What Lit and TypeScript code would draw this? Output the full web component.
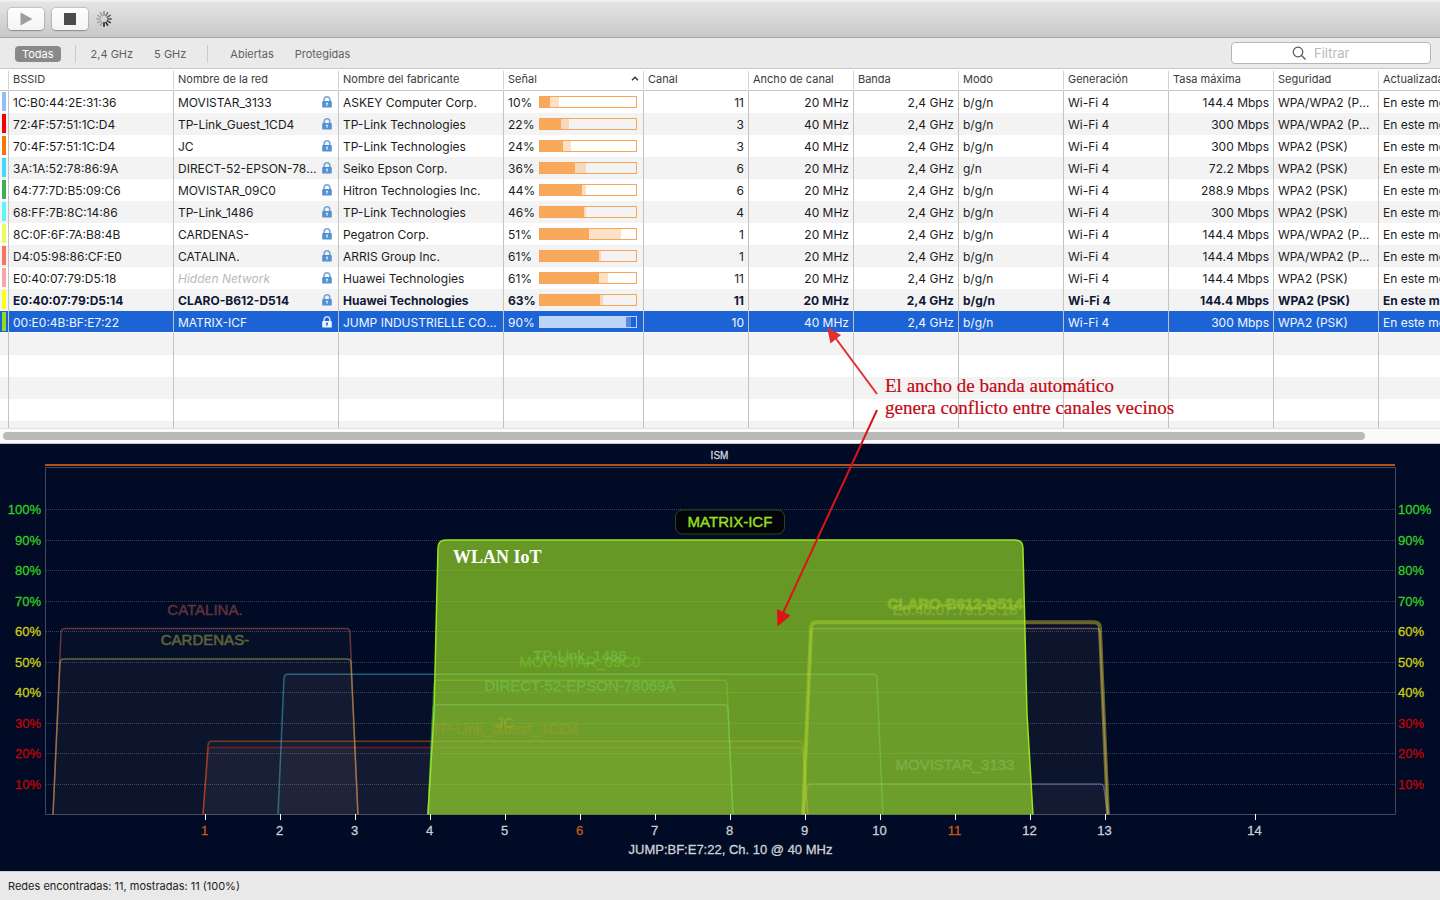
import { LitElement, html, svg, css } from "lit";
import { customElement, property, state } from "lit/decorators.js";
import { classMap } from "lit/directives/class-map.js";

interface Network {
  color: string;
  bssid: string;
  name: string;
  vendor: string;
  signal: number;
  peak: number;
  channel: number;
  width: number;
  mode: string;
  rate: string;
  security: string;
  hidden?: boolean;
  joined?: boolean;
  selected?: boolean;
}

const NETWORKS: Network[] = [
  { color: "#92bdfd", bssid: "1C:B0:44:2E:31:36", name: "MOVISTAR_3133", vendor: "ASKEY Computer Corp.", signal: 10, peak: 20, channel: 11, width: 20, mode: "b/g/n", rate: "144.4", security: "WPA/WPA2 (PSK)" },
  { color: "#f50000", bssid: "72:4F:57:51:1C:D4", name: "TP-Link_Guest_1CD4", vendor: "TP-Link Technologies", signal: 22, peak: 30, channel: 3, width: 40, mode: "b/g/n", rate: "300", security: "WPA/WPA2 (PSK)" },
  { color: "#f57900", bssid: "70:4F:57:51:1C:D4", name: "JC", vendor: "TP-Link Technologies", signal: 24, peak: 32, channel: 3, width: 40, mode: "b/g/n", rate: "300", security: "WPA2 (PSK)" },
  { color: "#42d8fc", bssid: "3A:1A:52:78:86:9A", name: "DIRECT-52-EPSON-78069A", vendor: "Seiko Epson Corp.", signal: 36, peak: 48, channel: 6, width: 20, mode: "g/n", rate: "72.2", security: "WPA2 (PSK)" },
  { color: "#3fae55", bssid: "64:77:7D:B5:09:C6", name: "MOVISTAR_09C0", vendor: "Hitron Technologies Inc.", signal: 44, peak: 48, channel: 6, width: 20, mode: "b/g/n", rate: "288.9", security: "WPA2 (PSK)" },
  { color: "#5ef4fb", bssid: "68:FF:7B:8C:14:86", name: "TP-Link_1486", vendor: "TP-Link Technologies", signal: 46, peak: 48, channel: 4, width: 40, mode: "b/g/n", rate: "300", security: "WPA2 (PSK)" },
  { color: "#eefc55", bssid: "8C:0F:6F:7A:B8:4B", name: "CARDENAS-", vendor: "Pegatron Corp.", signal: 51, peak: 84, channel: 1, width: 20, mode: "b/g/n", rate: "144.4", security: "WPA/WPA2 (PSK)" },
  { color: "#f8745c", bssid: "D4:05:98:86:CF:E0", name: "CATALINA.", vendor: "ARRIS Group Inc.", signal: 61, peak: 64, channel: 1, width: 20, mode: "b/g/n", rate: "144.4", security: "WPA/WPA2 (PSK)" },
  { color: "#f9a6a6", bssid: "E0:40:07:79:D5:18", name: "Hidden Network", vendor: "Huawei Technologies", signal: 61, peak: 71, channel: 11, width: 20, mode: "b/g/n", rate: "144.4", security: "WPA2 (PSK)", hidden: true },
  { color: "#fdfd14", bssid: "E0:40:07:79:D5:14", name: "CLARO-B612-D514", vendor: "Huawei Technologies", signal: 63, peak: 66, channel: 11, width: 20, mode: "b/g/n", rate: "144.4", security: "WPA2 (PSK)", joined: true },
  { color: "#8fdc1e", bssid: "00:E0:4B:BF:E7:22", name: "MATRIX-ICF", vendor: "JUMP INDUSTRIELLE COMPUTERTECHNIK", signal: 90, peak: 95, channel: 10, width: 40, mode: "b/g/n", rate: "300", security: "WPA2 (PSK)", selected: true },
];

const COLUMNS: { label: string; cls: string }[] = [
  { label: "BSSID", cls: "wide" },
  { label: "Nombre de la red", cls: "wide" },
  { label: "Nombre del fabricante", cls: "wide" },
  { label: "Señal", cls: "signal-col" },
  { label: "Canal", cls: "std" },
  { label: "Ancho de canal", cls: "std" },
  { label: "Banda", cls: "std" },
  { label: "Modo", cls: "std" },
  { label: "Generación", cls: "std" },
  { label: "Tasa máxima", cls: "std" },
  { label: "Seguridad", cls: "std" },
  { label: "Actualizada", cls: "last" },
];

@customElement("network-table")
class NetworkTable extends LitElement {
  static styles = css`
    :host {
      display: flex;
      flex-direction: column;
      min-height: 0;
      background: #fff;
      color: #1c1c1c;
    }
    .viewport {
      flex: 1;
      min-height: 0;
      overflow: hidden;
    }
    table {
      table-layout: fixed;
      width: 1519px;
      border-collapse: separate;
      border-spacing: 0;
      font-size: 12px;
    }
    .mark-col { width: 9px; }
    .wide { width: 165px; }
    .signal-col { width: 140px; }
    .std { width: 105px; }
    .last { width: 140px; }
    th {
      height: 21px;
      padding: 0;
      border-bottom: 1px solid #c9c9c9;
      font-size: 11px;
      font-weight: 400;
      text-align: left;
      color: #3a3a3a;
    }
    .head {
      display: flex;
      align-items: center;
      justify-content: space-between;
      box-sizing: border-box;
      height: 18px;
      padding: 0 4px 2px;
      border-right: 1px solid #d2d2d2;
    }
    .caret {
      width: 8px;
      height: 5px;
      fill: none;
      stroke: #333;
      stroke-width: 1.4;
    }
    td {
      box-sizing: border-box;
      height: 22px;
      padding: 2px 4px 0;
      border-right: 1px solid #c3c3c3;
      line-height: 20px;
      white-space: nowrap;
      overflow: hidden;
      text-overflow: ellipsis;
    }
    td.security { padding-right: 8px; }
    td.mark { padding: 0 2px; }
    .swatch {
      width: 4px;
      height: 19px;
      margin-bottom: 1px;
    }
    tbody tr:nth-child(even) { background: #f3f3f3; }
    tbody tr.joined {
      font-weight: 700;
      color: #0f1738;
    }
    tbody tr.selected {
      background: linear-gradient(#1c64d6 21px, #fff 21px);
      color: #f2f6ff;
    }
    .num { text-align: right; }
    .name, .signal {
      display: flex;
      align-items: center;
    }
    .name { gap: 2px; padding-right: 2px; }
    .label {
      flex: 1;
      overflow: hidden;
      text-overflow: ellipsis;
    }
    .ghost {
      font-style: italic;
      color: #b9b9b9;
    }
    .lock {
      flex: none;
      width: 10px;
      height: 12px;
      margin-bottom: 3px;
      color: #4489cc;
    }
    .selected .lock { color: #fff; }
    .signal {
      justify-content: space-between;
      padding-right: 2px;
    }
    .bar {
      position: relative;
      box-sizing: border-box;
      width: 98px;
      height: 12px;
      margin-bottom: 2px;
      border: 1px solid #f8a656;
      overflow: hidden;
    }
    .bar i {
      position: absolute;
      inset: 0 auto 0 0;
      background: #f9a95b;
    }
    .bar .peak { opacity: 0.35; }
    .selected .bar { border-color: #bcd5f5; }
    .selected .bar i { background: #bcd5f5; }
    .scroller {
      display: flex;
      align-items: center;
      height: 14px;
      border-top: 1px solid #e3e3e3;
      border-bottom: 1px solid #c6c6c6;
      background: #fafafa;
      padding: 0 3px;
    }
    .thumb {
      width: 95%;
      height: 8px;
      border-radius: 4px;
      background: #b9b9b9;
    }
  `;

  private row(n: Network) {
    return html`<tr class=${classMap({ joined: !!n.joined, selected: !!n.selected })}>
      <td class="mark"><div class="swatch" style="background:${n.color}"></div></td>
      <td>${n.bssid}</td>
      <td>
        <div class="name">
          <span class=${classMap({ label: true, ghost: !!n.hidden })}>${n.name}</span>
          <svg class="lock" viewBox="0 0 10 12" aria-hidden="true">
            <path d="M2.2 6V3.6a2.8 2.8 0 0 1 5.6 0V6" fill="none" stroke="currentColor" stroke-width="1.6" opacity=".75" />
            <rect x="0.2" y="5" width="9.6" height="6.6" rx="0.9" fill="currentColor" opacity=".92" />
            <path d="M5 6.6a1 1 0 0 1 .5 1.9v1.6h-1V8.5a1 1 0 0 1 .5-1.9z" fill=${n.selected ? "#1c64d6" : "#d4e8fa"} />
          </svg>
        </div>
      </td>
      <td>${n.vendor}</td>
      <td>
        <div class="signal">
          <span>${n.signal}%</span>
          <div class="bar">
            <i class="peak" style="width:${n.peak}%"></i>
            <i style="width:${n.signal}%"></i>
          </div>
        </div>
      </td>
      <td class="num">${n.channel}</td>
      <td class="num">${n.width} MHz</td>
      <td class="num">2,4 GHz</td>
      <td>${n.mode}</td>
      <td>Wi-Fi 4</td>
      <td class="num">${n.rate} Mbps</td>
      <td class="security">${n.security}</td>
      <td>En este momento</td>
    </tr>`;
  }

  render() {
    return html`
      <div class="viewport">
        <table>
          <colgroup>
            <col class="mark-col" />
            ${COLUMNS.map((c) => html`<col class=${c.cls} />`)}
          </colgroup>
          <thead>
            <tr>
              <th><div class="head"></div></th>
              ${COLUMNS.map(
                (c) => html`<th scope="col">
                  <div class="head">
                    <span>${c.label}</span>
                    ${c.label === "Señal"
                      ? html`<svg class="caret" viewBox="0 0 8 5" aria-hidden="true"><path d="M1 4.2 4 1.2l3 3" /></svg>`
                      : ""}
                  </div>
                </th>`
              )}
            </tr>
          </thead>
          <tbody>
            ${NETWORKS.map((n) => this.row(n))}
            ${Array.from({ length: 30 }, () => html`<tr>
              <td></td>${COLUMNS.map(() => html`<td></td>`)}
            </tr>`)}
          </tbody>
        </table>
      </div>
      <div class="scroller"><div class="thumb"></div></div>
    `;
  }
}

interface Shape {
  label: string;
  center: number;
  span: number;
  level: number;
  inset: number;
  color: string;
  bold?: boolean;
}

const SHAPES: Shape[] = [
  { label: "MOVISTAR_3133", center: 11, span: 2, level: 10, inset: 4, color: "#86b8fd" },
  { label: "TP-Link_Guest_1CD4", center: 5, span: 4, level: 22, inset: 5, color: "#f51414" },
  { label: "JC", center: 5, span: 4, level: 24, inset: 5, color: "#f57900" },
  { label: "DIRECT-52-EPSON-78069A", center: 6, span: 2, level: 36, inset: 5, color: "#42d8fc" },
  { label: "MOVISTAR_09C0", center: 6, span: 2, level: 44, inset: 6, color: "#3cd028" },
  { label: "TP-Link_1486", center: 6, span: 4, level: 46, inset: 6, color: "#46dcf0" },
  { label: "CARDENAS-", center: 1, span: 2, level: 51, inset: 7, color: "#e8f050" },
  { label: "CATALINA.", center: 1, span: 2, level: 61, inset: 8, color: "#f8745c" },
  { label: "E0:40:07:79:D5:18", center: 11, span: 2, level: 61, inset: 8, color: "#f09aa0" },
  { label: "CLARO-B612-D514", center: 11, span: 2, level: 63, inset: 8, color: "#f4e830", bold: true },
];

const PRIMARY = [1, 6, 11];

@customElement("channel-chart")
class ChannelChart extends LitElement {
  @state() private w = 1440;
  @state() private h = 427;
  private observer?: ResizeObserver;

  static styles = css`
    :host {
      display: block;
      min-height: 0;
      overflow: hidden;
      background: #010b25;
      font-family: "Liberation Sans", Arial, sans-serif;
    }
    svg { display: block; }
    text { font-size: 13px; }
    .frame { fill: none; stroke: #414860; }
    .grid { stroke: #ffffff; stroke-opacity: 0.22; stroke-dasharray: 1 1; }
    .tick { stroke: #fff; }
    .channel { fill: #cdced4; stroke: #cdced4; text-anchor: middle; }
    .primary { fill: #c65a14; stroke: #c65a14; }
    .channel, .pct, .ism, .info { stroke-width: 0.3; }
    .ism { font-size: 10px; fill: #d6d8de; stroke: #d6d8de; text-anchor: middle; }
    .pct { text-anchor: end; }
    .right { text-anchor: start; }
    .high { fill: #37cc22; stroke: #37cc22; }
    .mid { fill: #cccc18; stroke: #cccc18; }
    .low { fill: #bf0505; stroke: #bf0505; }
    .ssid { font-size: 15px; text-anchor: middle; stroke-width: 0.4; }
    .bold { font-weight: 700; stroke-width: 1; }
    .info { fill: #d0d2d8; stroke: #d0d2d8; text-anchor: middle; }
    .pill { fill: #02040a; stroke: #2c4a1a; }
    .active { fill: #98e01e; stroke: #98e01e; }
  `;

  connectedCallback() {
    super.connectedCallback();
    this.observer = new ResizeObserver(([entry]) => {
      this.w = Math.round(entry.contentRect.width);
      this.h = Math.round(entry.contentRect.height);
    });
    this.observer.observe(this);
  }

  disconnectedCallback() {
    this.observer?.disconnect();
    super.disconnectedCallback();
  }

  private get bottom() { return this.h - 56.5; }
  private y(p: number) { return this.bottom - (p * (this.bottom - 23.5)) / 113.77; }
  private get step() { return (this.w - 90) / 18; }
  private x(ch: number) { return 45.5 + (ch + 1.133) * this.step; }

  private outline(center: number, span: number, level: number, inset: number, r: number, kink = 0) {
    const half = (span + 0.033) * this.step;
    const c = this.x(center);
    const top = this.y(level);
    const base = this.bottom;
    const l = c - half;
    const rt = c + half;
    const ky = base - (base - top) * 0.37;
    const up = kink ? `L${l + kink} ${ky}` : "";
    const down = kink ? `L${rt - kink} ${ky}` : "";
    return `M${l} ${base}${up}L${l + inset} ${top + r}Q${l + inset} ${top} ${l + inset + r} ${top}H${rt - inset - r}Q${rt - inset} ${top} ${rt - inset} ${top + r}${down}L${rt} ${base}`;
  }

  render() {
    const { w, h, bottom } = this;
    const right = w - 44.5;
    const levels = [10, 20, 30, 40, 50, 60, 70, 80, 90, 100];
    const tone = (p: number) => (p >= 70 ? "high" : p >= 40 ? "mid" : "low");
    const channels = Array.from({ length: 14 }, (_, i) => i + 1);
    const matrixY = this.y(90);
    const green = this.outline(8, 4, 90, 10, 8, 6);
    return html`<svg width=${w} height=${h} role="img" aria-label="Canales">
      <text class="ism" x=${w / 2 - 0.5} y="15">ISM</text>
      <rect x="45" y="20" width=${Math.max(0, w - 90)} height="2" fill="#ae531b" />
      ${levels.map((p) => {
        const gy = Math.floor(this.y(p) + 0.05) + 0.5;
        return svg`
          <line class="grid" x1="46" x2=${right} y1=${gy} y2=${gy} />
          <text class="pct ${tone(p)}" x="41" y=${gy + 4.5}>${p}%</text>
          <text class="pct right ${tone(p)}" x=${right + 2.5} y=${gy + 4.5}>${p}%</text>`;
      })}
      <path class="frame" d="M45.5 ${bottom}V23.5H${right}V${bottom}Z" />
      ${SHAPES.map((s) => svg`
        <path
          d=${this.outline(s.center, s.span, s.level, s.inset, s.bold ? 6 : 4)}
          fill="#ffe0e0" fill-opacity=".026"
          stroke=${s.color} stroke-opacity=".4" stroke-width=${s.bold ? 4 : 1.5}
        />`)}
      ${SHAPES.map((s) => svg`
        <text class="ssid ${s.bold ? "bold" : ""}" x=${this.x(s.center) - 0.5} y=${this.y(s.level) - 13.5}
          fill=${s.color} stroke=${s.color} opacity=".38">${s.label}</text>`)}
      <path d=${green} fill="#98db28" fill-opacity=".68" stroke="#98e41e" stroke-width="1.5" />
      <rect class="pill" x=${this.x(8) - 55} y=${matrixY - 30} width="109" height="24" rx="7" />
      <text class="ssid active" x=${this.x(8) - 0.5} y=${matrixY - 13}>MATRIX-ICF</text>
      ${channels.map((ch) => {
        const cx = Math.floor(this.x(ch === 14 ? 15 : ch)) + 0.5;
        return svg`
          <line class="tick" x1=${cx} x2=${cx} y1=${bottom - 0.5} y2=${bottom + 5.5} />
          <text class="channel ${PRIMARY.includes(ch) ? "primary" : ""}" x=${cx - 1} y=${bottom + 20.5}>${ch}</text>`;
      })}
      <text class="info" x=${this.x(8)} y=${bottom + 39.5}>JUMP:BF:E7:22, Ch. 10 @ 40 MHz</text>
    </svg>`;
  }
}

@customElement("app-root")
class AppRoot extends LitElement {
  @property() filter = "Todas";

  static styles = css`
    :host {
      position: relative;
      display: flex;
      flex-direction: column;
      height: 100vh;
      overflow: hidden;
      background: #e9e9e9;
      font-family: Inter, sans-serif;
      font-size: 11px;
      color: #222;
    }
    .titlebar {
      display: flex;
      align-items: center;
      gap: 8px;
      height: 37px;
      padding: 0 8px;
      border-bottom: 1px solid #a6a6a6;
      background: linear-gradient(#f3f3f3 1px, #e5e4e5 2px, #c8c7c9);
    }
    .tool {
      display: flex;
      align-items: center;
      justify-content: center;
      width: 36px;
      height: 22px;
      padding: 0;
      border: 0;
      border-radius: 4px;
      background: linear-gradient(#fefefe, #f4f4f4);
      box-shadow: 0 0 1px 1px rgba(0, 0, 0, 0.14), 0 1px 1px rgba(0, 0, 0, 0.2);
    }
    .glyph { width: 14px; height: 14px; }
    .spinner { width: 16px; height: 16px; }
    .filters {
      display: flex;
      align-items: center;
      height: 30px;
      padding: 0 9px 0 15px;
      border-bottom: 1px solid #cacaca;
      background: #eaeaea;
    }
    .chip {
      height: 16px;
      margin-top: 2px;
      padding: 0 7px;
      border: 0;
      border-radius: 4px;
      background: none;
      font: inherit;
      line-height: 16px;
      color: #616161;
    }
    .chip.on {
      background: #898989;
      color: #fff;
    }
    .group {
      display: flex;
      gap: 7px;
    }
    .rule {
      width: 1px;
      height: 18px;
      margin: 2px 8px 0 14px;
      background: #cbcbcb;
    }
    .rule.far { margin-right: 15px; }
    .search {
      display: flex;
      align-items: center;
      justify-content: center;
      gap: 8px;
      box-sizing: border-box;
      width: 200px;
      height: 22px;
      margin-left: auto;
      padding-left: 8px;
      border: 1px solid #b6b6b6;
      border-radius: 4px;
      background: #fff;
    }
    .search svg {
      width: 14px;
      height: 14px;
      fill: none;
      stroke: #555;
      stroke-width: 1.2;
    }
    .search input {
      width: 64px;
      padding: 0;
      border: 0;
      outline: 0;
      background: none;
      font: 13px/18px Inter, sans-serif;
      color: #222;
    }
    .search input::placeholder { color: #b9b9b9; }
    network-table { flex: 375 1 0; }
    channel-chart { flex: 427 1 0; }
    .status {
      height: 28px;
      padding: 0 8px;
      border-top: 1px solid #cdcdcd;
      line-height: 28px;
    }
    .notes {
      position: absolute;
      inset: 0;
      width: 100%;
      height: 100%;
      pointer-events: none;
      font-family: "Liberation Serif", serif;
    }
    .note-text {
      font-size: 19px;
      fill: #c20812;
      stroke: #c20812;
      stroke-width: 0.2;
    }
    .arrow { stroke-width: 2; }
    .zone {
      font-size: 18px;
      fill: #fff;
      font-weight: 700;
    }
  `;

  private chip(label: string) {
    return html`<button
      class=${classMap({ chip: true, on: this.filter === label })}
      @click=${() => (this.filter = label)}
    >${label}</button>`;
  }

  render() {
    return html`
      <header class="titlebar">
        <button class="tool" aria-label="Iniciar">
          <svg class="glyph" viewBox="0 0 14 14"><path d="M1.5 .5 13.5 7 1.5 13.5Z" fill="#9d9d9d" /></svg>
        </button>
        <button class="tool" aria-label="Detener">
          <svg class="glyph" viewBox="0 0 14 14"><rect x="1" y="1" width="12" height="12" fill="#4c4c4c" /></svg>
        </button>
        <svg class="spinner" viewBox="0 0 16 16" aria-hidden="true">
          ${Array.from({ length: 12 }, (_, i) => svg`
            <line x1="8" y1="0.8" x2="8" y2="4.2" stroke="#111" stroke-width="1.5" stroke-linecap="round"
              transform="rotate(${180 - i * 30} 8 8)" opacity=${Math.max(0.25, 1 - i * 0.1)} />`)}
        </svg>
      </header>
      <nav class="filters" aria-label="Filtros">
        ${this.chip("Todas")}
        <span class="rule"></span>
        <div class="group">${this.chip("2,4 GHz")}${this.chip("5 GHz")}</div>
        <span class="rule far"></span>
        <div class="group">${this.chip("Abiertas")}${this.chip("Protegidas")}</div>
        <label class="search">
          <svg viewBox="0 0 14 14" aria-hidden="true"><circle cx="6" cy="6" r="4.8" /><path d="m9.5 9.5 4 4" /></svg>
          <input type="text" placeholder="Filtrar" aria-label="Filtrar" />
        </label>
      </nav>
      <network-table></network-table>
      <channel-chart></channel-chart>
      <footer class="status">Redes encontradas: 11, mostradas: 11 (100%)</footer>
      <svg class="notes">
        <path class="arrow" d="M877 394 834 336" stroke="#e03030" />
        <path d="M827 327 841 335 830.5 343.5Z" fill="#e03030" />
        <path class="arrow" d="M877 410 783 613" stroke="#dc1414" />
        <path d="M777.5 626.5 777 609 790.5 615.5Z" fill="#dc1414" />
        <text class="note-text" x="885" y="392">El ancho de banda automático</text>
        <text class="note-text" x="885" y="414">genera conflicto entre canales vecinos</text>
        <text class="zone" x="453" y="563">WLAN IoT</text>
      </svg>
    `;
  }
}
